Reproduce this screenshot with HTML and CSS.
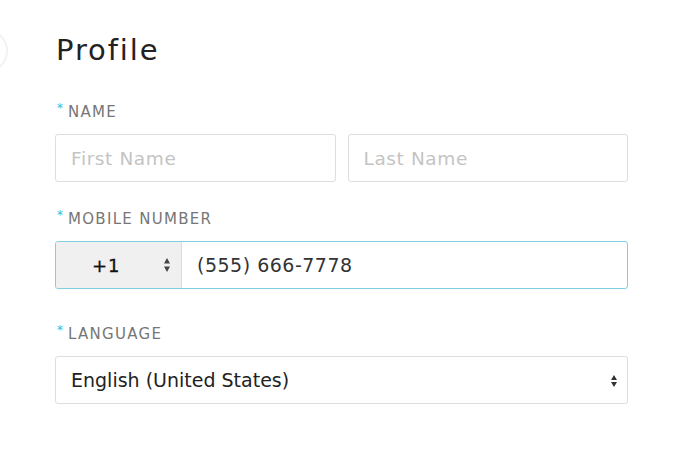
FILE: index.html
```html
<!DOCTYPE html>
<html>
<head>
<meta charset="utf-8">
<link rel="stylesheet" href="styles.css">
</head>
<body>
<div class="side-circle"></div>
<main class="profile">
  <h1 class="title">Profile</h1>

  <section class="field field-name">
    <div class="label"><span class="req">*</span>NAME</div>
    <div class="row">
      <div class="input placeholder">First Name</div>
      <div class="input placeholder">Last Name</div>
    </div>
  </section>

  <section class="field field-mobile">
    <div class="label"><span class="req">*</span>MOBILE NUMBER</div>
    <div class="phone">
      <div class="code">
        <span class="code-text">+1</span>
        <svg class="arrows" width="6" height="14" viewBox="0 0 6 14"><path d="M3 0 L6 5.5 L0 5.5 Z M0 8.5 L6 8.5 L3 14 Z" fill="#444"/></svg>
      </div>
      <div class="number">(555) 666-7778</div>
    </div>
  </section>

  <section class="field field-lang">
    <div class="label"><span class="req">*</span>LANGUAGE</div>
    <div class="select">
      <span class="value">English (United States)</span>
      <svg class="arrows" width="6" height="12" viewBox="0 0 6 12"><path d="M3 0 L6 5 L0 5 Z M0 7 L6 7 L3 12 Z" fill="#333"/></svg>
    </div>
  </section>
</main>
</body>
</html>
```
FILE: styles.css
```css
html, body {
  margin: 0;
  padding: 0;
  background: #ffffff;
  width: 680px;
  height: 454px;
  overflow: hidden;
}
body {
  font-family: "DejaVu Sans", "Liberation Sans", sans-serif;
  position: relative;
}
.side-circle {
  position: absolute;
  left: -36px;
  top: 29px;
  width: 40px;
  height: 40px;
  border: 2px solid #f2f2f2;
  border-radius: 50%;
}
.profile {
  padding: 32px 52px 0 55px;
  width: 573px;
}
.title {
  margin: 0;
  font-size: 29px;
  line-height: 36px;
  font-weight: 400;
  letter-spacing: 1.9px;
  color: #222;
  padding-left: 1px;
}
.field-name { margin-top: 35px; }
.field-mobile { margin-top: 28px; }
.field-lang { margin-top: 36px; }
.label {
  font-size: 15px;
  line-height: 18px;
  color: #767676;
  letter-spacing: 1.3px;
  margin-bottom: 13px;
  position: relative;
  padding-left: 13px;
}
.req {
  position: absolute;
  left: 2px;
  top: -4px;
  color: #3ab7da;
  font-size: 12px;
}
.row {
  display: flex;
  gap: 12px;
}
.input {
  flex: 1;
  border: 1px solid #dedede;
  border-radius: 3px;
  box-sizing: border-box;
  height: 48px;
  display: flex;
  align-items: center;
  padding-left: 15px;
  font-size: 18.5px;
  letter-spacing: 0.6px;
}
.placeholder { color: #c4c4c4; }
.phone {
  display: flex;
  height: 48px;
  box-sizing: border-box;
  border: 1px solid #7fd1e2;
  border-radius: 3px;
  overflow: hidden;
}
.code {
  width: 125px;
  background: #f0f0f0;
  border-right: 1px solid #dcdcdc;
  display: flex;
  align-items: center;
  position: relative;
  font-size: 18px;
  color: #111;
}
.code-text {
  margin-left: 36px;
  letter-spacing: 1px;
  -webkit-text-stroke: 0.3px #111;
}
.code .arrows {
  position: absolute;
  left: 108px;
  top: 16px;
}
.number {
  display: flex;
  align-items: center;
  padding-left: 15px;
  font-size: 19px;
  letter-spacing: 0.5px;
  color: #333;
}
.select {
  height: 48px;
  box-sizing: border-box;
  border: 1px solid #dedede;
  border-radius: 3px;
  display: flex;
  align-items: center;
  justify-content: space-between;
  padding: 0 10px 0 15px;
  font-size: 19px;
  color: #222;
}
.select .arrows { margin-top: 1px; }
```
